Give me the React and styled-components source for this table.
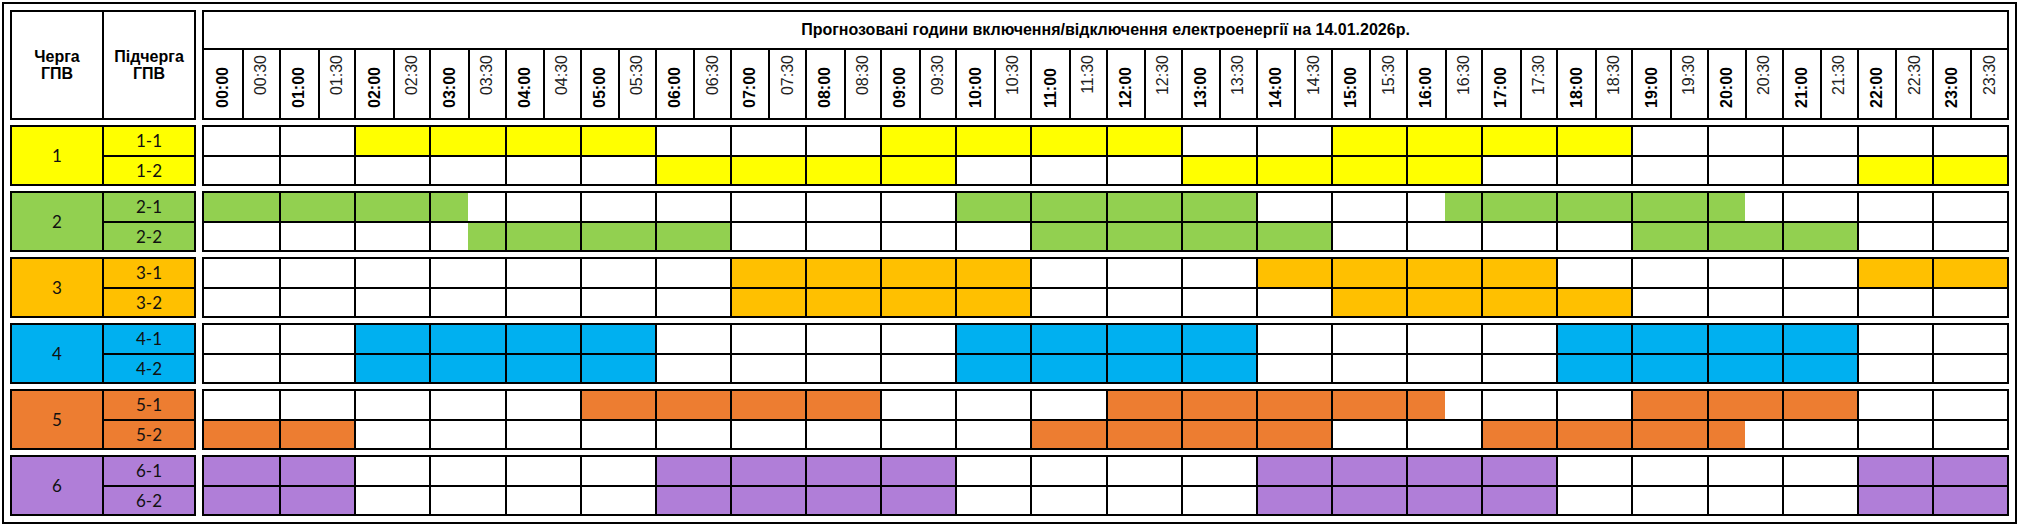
import styled, { createGlobalStyle } from "styled-components";

const GlobalStyle = createGlobalStyle`
  html, body {
    margin: 0;
    padding: 0;
    background: #ffffff;
  }
  body {
    font-family: "Liberation Sans", Arial, sans-serif;
    color: #000000;
  }
`;

const COLORS = {
  1: "#ffff00",
  2: "#92d050",
  3: "#ffc000",
  4: "#00b0f0",
  5: "#ed7d31",
  6: "#b07ed8",
};

// hours a..b inclusive -> half-hour index range
const h = (a, b) => [a * 2, b * 2 + 1];

const schedule = {
  "1-1": [h(2, 5), h(9, 12), h(15, 18)],
  "1-2": [h(6, 9), h(13, 16), h(22, 23)],
  "2-1": [[0, 6], [20, 27], [33, 40]],
  "2-2": [[7, 13], [22, 29], [38, 43]],
  "3-1": [h(7, 10), h(14, 17), h(22, 23)],
  "3-2": [h(7, 10), h(15, 18)],
  "4-1": [h(2, 5), h(10, 13), h(18, 21)],
  "4-2": [h(2, 5), h(10, 13), h(18, 21)],
  "5-1": [[10, 17], [24, 32], [38, 43]],
  "5-2": [[0, 3], [22, 29], [34, 40]],
  "6-1": [h(0, 1), h(6, 9), h(14, 17), h(22, 23)],
  "6-2": [h(0, 1), h(6, 9), h(14, 17), h(22, 23)],
};

const pad = (n) => String(n).padStart(2, "0");
const hours = Array.from({ length: 24 }, (_, i) => i);
const groups = [1, 2, 3, 4, 5, 6];

function isOff(key, half) {
  return schedule[key].some(([a, b]) => half >= a && half <= b);
}

export default function App() {
  return (
    <>
      <GlobalStyle />
      <Frame>
        <LeftHead>
          <HeadCell>
            Черга
            <br />
            ГПВ
          </HeadCell>
          <HeadCell $divider>
            Підчерга
            <br />
            ГПВ
          </HeadCell>
        </LeftHead>

        <GridBox>
          <TitleRow>
            Прогнозовані години включення/відключення електроенергії на
            14.01.2026р.
          </TitleRow>
          <TimeRow>
            {hours.map((hr) => (
              <HourHead key={hr} $first={hr === 0}>
                <HalfHead $bold>
                  <TimeLabel $bold>{pad(hr)}:00</TimeLabel>
                </HalfHead>
                <HalfHead $divider>
                  <TimeLabel>{pad(hr)}:30</TimeLabel>
                </HalfHead>
              </HourHead>
            ))}
          </TimeRow>
        </GridBox>

        {groups.map((g) => (
          <Group key={g} g={g} />
        ))}
      </Frame>
    </>
  );
}

function Group({ g }) {
  const color = COLORS[g];
  const subs = [`${g}-1`, `${g}-2`];
  return (
    <>
      <LeftBox>
        <GroupLabel $color={color}>{g}</GroupLabel>
        <SubCol>
          {subs.map((s, i) => (
            <SubLabel key={s} $color={color} $divider={i > 0}>
              {s}
            </SubLabel>
          ))}
        </SubCol>
      </LeftBox>
      <GridBox>
        {subs.map((s, i) => (
          <SubRow key={s} $divider={i > 0}>
            {hours.map((hr) => (
              <HourCell key={hr} $first={hr === 0}>
                <Half $color={isOff(s, hr * 2) ? color : "#ffffff"} />
                <Half $color={isOff(s, hr * 2 + 1) ? color : "#ffffff"} />
              </HourCell>
            ))}
          </SubRow>
        ))}
      </GridBox>
    </>
  );
}

const Frame = styled.div`
  box-sizing: border-box;
  width: 2015px;
  height: 522px;
  margin: 2px;
  border: 2px solid #000;
  padding: 6px;

  display: grid;
  grid-template-columns: 186px 1807px;
  grid-template-rows: 110px repeat(6, 61px);
  column-gap: 6px;
  row-gap: 5px;
`;

const LeftHead = styled.div`
  box-sizing: border-box;
  border: 2px solid #000;
  display: grid;
  grid-template-columns: 90px 92px;
`;

const HeadCell = styled.div`
  box-sizing: border-box;
  display: flex;
  align-items: center;
  justify-content: center;
  text-align: center;

  font-family: "Liberation Sans", Arial, sans-serif;
  font-weight: bold;
  font-size: 16px;
  line-height: 17px;
  border-left: ${(p) => (p.$divider ? "2px solid #000" : "none")};
`;

const GridBox = styled.div`
  box-sizing: border-box;
  border: 2px solid #000;
  display: flex;
  flex-direction: column;
  min-width: 0;
`;

const TitleRow = styled.div`
  box-sizing: border-box;
  height: 38px;
  border-bottom: 2px solid #000;

  display: flex;
  align-items: center;
  justify-content: center;

  font-family: "Liberation Sans", Arial, sans-serif;
  font-weight: bold;
  font-size: 16px;
`;

const TimeRow = styled.div`
  flex: 1;
  display: grid;
  grid-template-columns: repeat(24, 1fr);
`;

const HourHead = styled.div`
  box-sizing: border-box;
  display: grid;
  grid-template-columns: 1fr 1fr;
  border-left: ${(p) => (p.$first ? "none" : "2px solid #000")};
`;

const HalfHead = styled.div`
  box-sizing: border-box;
  display: flex;
  justify-content: center;
  align-items: ${(p) => (p.$bold ? "flex-end" : "flex-start")};
  padding: ${(p) => (p.$bold ? "0 0 10px" : "5px 0 0")};
  border-left: ${(p) => (p.$divider ? "2px solid #000" : "none")};
`;

const TimeLabel = styled.span`
  writing-mode: vertical-rl;
  transform: rotate(180deg);
  font-family: "Liberation Sans", Arial, sans-serif;
  font-size: 16px;
  line-height: 16px;
  font-weight: ${(p) => (p.$bold ? "bold" : "normal")};
  color: ${(p) => (p.$bold ? "#000" : "#222")};
`;

const LeftBox = styled.div`
  box-sizing: border-box;
  border: 2px solid #000;
  display: grid;
  grid-template-columns: 90px 92px;
`;

const GroupLabel = styled.div`
  display: flex;
  align-items: center;
  justify-content: center;
  background: ${(p) => p.$color};
  font-family: Lato, "Open Sans", sans-serif;
  font-size: 17px;
  color: #111;
`;

const SubCol = styled.div`
  box-sizing: border-box;
  border-left: 2px solid #000;
  display: flex;
  flex-direction: column;
`;

const SubLabel = styled.div`
  box-sizing: border-box;
  flex: 1;
  display: flex;
  align-items: center;
  justify-content: center;
  background: ${(p) => p.$color};
  border-top: ${(p) => (p.$divider ? "2px solid #000" : "none")};
  font-family: Lato, "Open Sans", sans-serif;
  font-size: 17px;
  color: #111;
`;

const SubRow = styled.div`
  box-sizing: border-box;
  flex: 1;
  display: grid;
  grid-template-columns: repeat(24, 1fr);
  border-top: ${(p) => (p.$divider ? "2px solid #000" : "none")};
`;

const HourCell = styled.div`
  box-sizing: border-box;
  display: grid;
  grid-template-columns: 1fr 1fr;
  border-left: ${(p) => (p.$first ? "none" : "2px solid #000")};
`;

const Half = styled.div`
  background: ${(p) => p.$color};
`;
